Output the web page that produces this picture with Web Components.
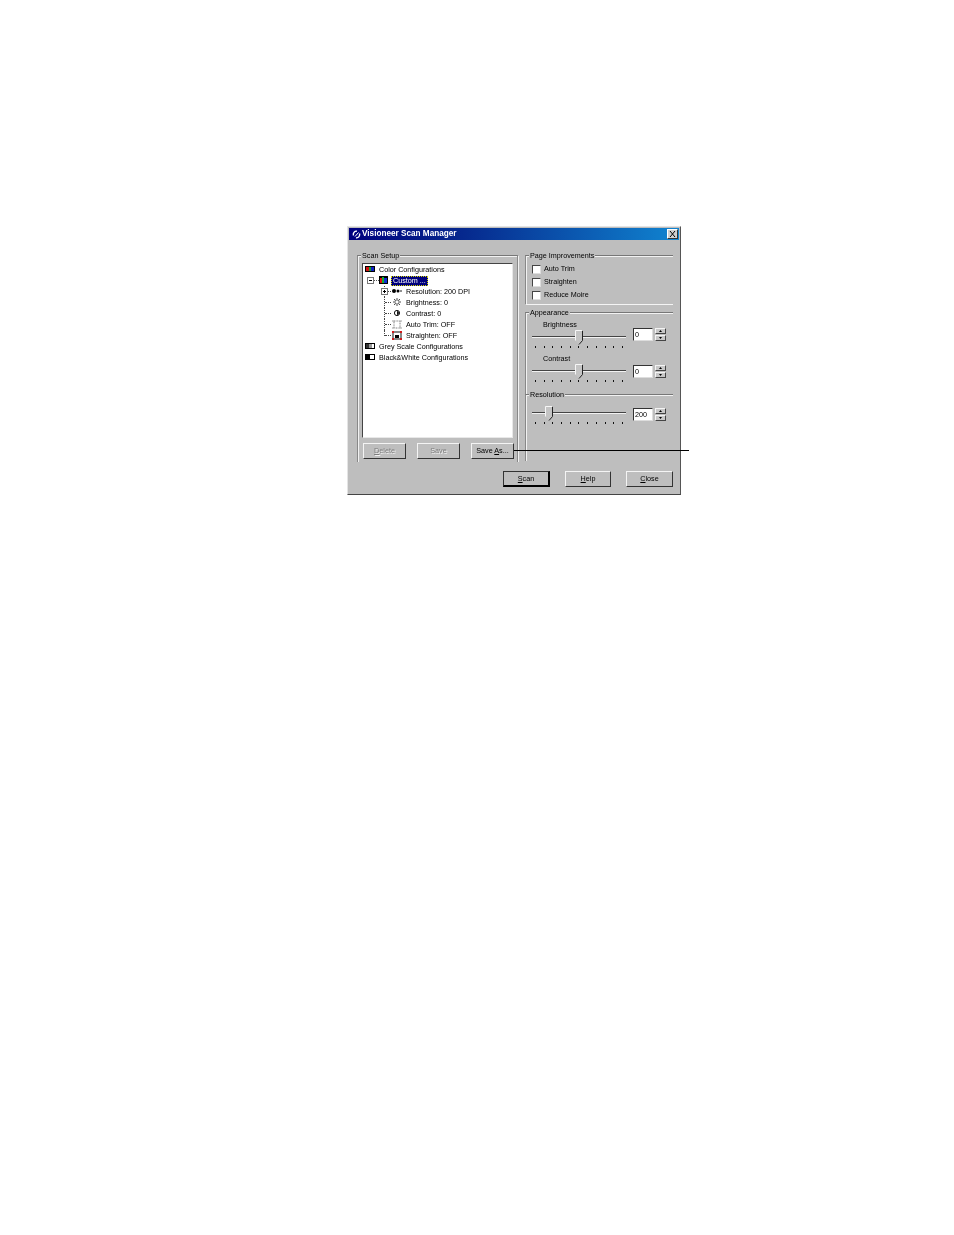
<!DOCTYPE html>
<html lang="en">
<head>
<meta charset="UTF-8">
<title>Visioneer Scan Manager</title>
<style>
    html, body { margin: 0; background: #fff; }
    body {
        height: 1235px;
        box-sizing: border-box;
        padding: 226px 0 0 347px;
        font: 7.2px/10px "Liberation Sans", Arial, sans-serif;
        color: #000;
    }
    .main { display: flex; margin: 15px 0 0 8px; }
    .right { display: flex; flex-direction: column; margin-left: 7px; width: 148px; }
    .footer { display: flex; justify-content: flex-end; gap: 15px; padding: 9px 6px 0 0; }
    .checks { display: flex; flex-direction: column; gap: 3.2px; padding: 8px 0 0 6px; }
    .tree-buttons { display: flex; gap: 11px; padding: 5px 0 0 1px; }
</style>
</head>
<body>
<scan-dialog>
    <title-bar>Visioneer Scan Manager</title-bar>
    <div class="main">
        <group-box label="Scan Setup" w="161" h="207" pad="7px 0 0 4px">
            <tree-view>
                <tree-row icon="color">Color Configurations</tree-row>
                <tree-row icon="custom" kind="open" selected>Custom ...</tree-row>
                <tree-row icon="res" kind="child-plus">Resolution: 200 DPI</tree-row>
                <tree-row icon="sun" kind="child">Brightness: 0</tree-row>
                <tree-row icon="contrast" kind="child">Contrast: 0</tree-row>
                <tree-row icon="trim" kind="child">Auto Trim: OFF</tree-row>
                <tree-row icon="straight" kind="last">Straighten: OFF</tree-row>
                <tree-row icon="grey">Grey Scale Configurations</tree-row>
                <tree-row icon="bw">Black&amp;White Configurations</tree-row>
            </tree-view>
            <div class="tree-buttons">
                <win-button w="43" disabled><u>D</u>elete</win-button>
                <win-button w="43" disabled>Save</win-button>
                <win-button w="43">Save <u>A</u>s...</win-button>
            </div>
        </group-box>
        <div class="right">
            <group-box label="Page Improvements" h="50" bottom pad="0">
                <div class="checks">
                    <check-row>Auto Trim</check-row>
                    <check-row>Straighten</check-row>
                    <check-row>Reduce Moire</check-row>
                </div>
            </group-box>
            <group-box label="Appearance" h="82" top="7" pad="7px 0 0 6px">
                <slider-row label="Brightness" value="0" thumb="43" spin="-2"></slider-row>
                <slider-row label="Contrast" value="0" thumb="43" spin="1"></slider-row>
            </group-box>
            <group-box label="Resolution" h="67" pad="11px 0 0 6px">
                <slider-row value="200" thumb="13" spin="2"></slider-row>
            </group-box>
        </div>
    </div>
    <div class="footer">
        <win-button w="47" isdefault><u>S</u>can</win-button>
        <win-button w="46"><u>H</u>elp</win-button>
        <win-button w="47"><u>C</u>lose</win-button>
    </div>
</scan-dialog>
<call-out></call-out>

<script>
    class ScanDialog extends HTMLElement {
        constructor() {
            super();
            this.attachShadow({ mode: 'open' });
            this.shadowRoot.innerHTML = `
                <style>
                    :host {
                        display: block;
                        box-sizing: border-box;
                        width: 334px;
                        height: 269px;
                        background: #bebebe;
                        border: 1px solid;
                        border-color: #e4e4e4 #555 #444 #e4e4e4;
                        padding: 1px;
                        filter: blur(0.3px);
                    }
                </style>
                <slot></slot>`;
        }
    }

    class TitleBar extends HTMLElement {
        constructor() {
            super();
            this.attachShadow({ mode: 'open' });
            this.shadowRoot.innerHTML = `
                <style>
                    :host {
                        display: flex;
                        align-items: center;
                        height: 12px;
                        padding: 0 1px 0 3px;
                        background: linear-gradient(90deg, #00007f 0%, #06298e 35%, #1084d0 100%);
                        color: #fff;
                        font-weight: bold;
                        font-size: 8.2px;
                    }
                    svg { flex: none; margin-right: 1px; }
                    .text { flex: 1; white-space: nowrap; }
                    .close {
                        box-sizing: border-box;
                        width: 11px;
                        height: 10px;
                        background: #d0d0d0;
                        border: 1px solid;
                        border-color: #fff #333 #333 #fff;
                        display: flex;
                    }
                </style>
                <svg width="9" height="9" viewBox="0 0 9 9" fill="none" stroke="#fff" stroke-width="1.4">
                    <path d="M1.5 5.5A3.2 3.2 0 0 1 5 1.2"/>
                    <path d="M7.5 3.5A3.2 3.2 0 0 1 4 7.8"/>
                    <path d="M3 6.5L6.5 2.5" stroke-width="1"/>
                </svg>
                <span class="text"><slot></slot></span>
                <span class="close">
                    <svg width="9" height="8" viewBox="0 0 9 8" stroke="#000" stroke-width="1" style="margin:0">
                        <path d="M2 1L7 7M7 1L2 7"/>
                    </svg>
                </span>`;
        }
    }

    class GroupBox extends HTMLElement {
        constructor() {
            super();
            this.attachShadow({ mode: 'open' });
            const w = this.getAttribute('w');
            const h = this.getAttribute('h');
            const top = this.getAttribute('top') || 0;
            const pad = this.getAttribute('pad') || '0';
            const isLeft = w !== null;
            this.shadowRoot.innerHTML = `
                <style>
                    :host {
                        display: block;
                        position: relative;
                        box-sizing: border-box;
                        ${w ? `width: ${w}px;` : ''}
                        height: ${h}px;
                        margin-top: ${top}px;
                        padding: ${pad};
                        border-top: 1px solid #777;
                        box-shadow: inset 0 1px 0 #f2f2f2;
                        border-left: 1px solid #888;
                        ${isLeft ? 'border-right: 1px solid #888;' : ''}
                    }
                    :host([bottom]) { border-bottom: 1px solid #f4f4f4; }
                    .legend {
                        position: absolute;
                        top: -5px;
                        left: 3px;
                        padding: 0 1px;
                        background: #bebebe;
                        white-space: nowrap;
                    }
                    .edge {
                        position: absolute;
                        top: 0;
                        bottom: 0;
                        left: 0;
                        width: 1px;
                        background: #f2f2f2;
                    }
                    .edge.r { left: auto; right: -2px; display: ${isLeft ? 'block' : 'none'}; }
                </style>
                <span class="edge"></span>
                <span class="edge r"></span>
                <span class="legend">${this.getAttribute('label')}</span>
                <slot></slot>`;
        }
    }

    class TreeView extends HTMLElement {
        constructor() {
            super();
            this.attachShadow({ mode: 'open' });
            this.shadowRoot.innerHTML = `
                <style>
                    :host {
                        display: block;
                        box-sizing: border-box;
                        width: 151px;
                        height: 175px;
                        background: #fff;
                        border: 1px solid;
                        border-color: #444 #e8e8e8 #e8e8e8 #444;
                    }
                </style>
                <slot></slot>`;
        }
    }

    const TREE_ICONS = {
        color: `<rect x="0" y="1" width="10" height="6" fill="#000"/><rect x="1" y="2" width="3" height="4" fill="#d01010"/><rect x="4" y="2" width="2" height="4" fill="#10a030"/><rect x="6" y="2" width="3" height="4" fill="#1020c0"/>`,
        custom: `<rect x="0" y="0" width="9" height="8" fill="#000"/><rect x="1" y="2" width="2" height="5" fill="#e01010"/><rect x="3" y="1" width="2" height="6" fill="#10b030"/><rect x="5" y="2" width="3" height="5" fill="#1030d0"/>`,
        res: `<circle cx="3" cy="4" r="2" fill="#000"/><circle cx="7" cy="4" r="1.5" fill="#000"/><circle cx="10" cy="4" r=".8" fill="#000"/>`,
        sun: `<circle cx="6" cy="4" r="2.2" fill="#fff" stroke="#222" stroke-width=".8"/><path d="M6 0V1M6 7V8M2 4H3M9 4H10M3 1L4 2M9 1L8 2M3 7L4 6M9 7L8 6" stroke="#222" stroke-width=".8"/>`,
        contrast: `<circle cx="6" cy="4" r="2.6" fill="#fff" stroke="#111"/><path d="M6 2a2 2 0 0 1 0 4z" fill="#111"/>`,
        trim: `<rect x="3" y="1" width="6" height="7" fill="#fff" stroke="#666" stroke-width=".8" stroke-dasharray="1 .6"/><path d="M1 1H3M9 1H11M1 8H3M9 8H11" stroke="#777" stroke-width=".7"/>`,
        straight: `<rect x="2" y="1" width="8" height="7" fill="#fff" stroke="#111"/><rect x="4" y="4" width="4" height="3" fill="#000"/><path d="M1 0H3V2H1ZM9 0H11V2H9ZM1 7H3V9H1ZM9 7H11V9H9Z" fill="#d01818"/>`,
        grey: `<rect x="0" y="1" width="10" height="6" fill="#000"/><rect x="1" y="2" width="8" height="4" fill="#fff"/><rect x="1" y="2" width="3" height="4" fill="#333"/><rect x="4" y="2" width="3" height="4" fill="#999"/>`,
        bw: `<rect x="0" y="1" width="10" height="6" fill="#000"/><rect x="5" y="2" width="4" height="4" fill="#fff"/>`
    };

    class TreeRow extends HTMLElement {
        constructor() {
            super();
            this.attachShadow({ mode: 'open' });
            const kind = this.getAttribute('kind') || 'root';
            const isChild = kind === 'child' || kind === 'child-plus' || kind === 'last';
            const box = (sign) => `<span class="box">${sign}</span>`;
            let lead = '';
            if (kind === 'open') {
                lead = `<span class="gut open">${box('<i class="h"></i>')}<span class="dash"></span></span>`;
            } else if (isChild) {
                lead = `<span class="gut kid ${kind}"><span class="v"></span><span class="hl"></span>
                    ${kind === 'child-plus' ? box('<i class="h"></i><i class="p"></i>') : ''}</span>`;
            }
            this.shadowRoot.innerHTML = `
                <style>
                    :host {
                        display: flex;
                        align-items: center;
                        height: 11px;
                        padding-left: 1px;
                        white-space: nowrap;
                    }
                    svg { flex: none; display: block; }
                    .gut { position: relative; flex: none; height: 11px; }
                    .gut.open { width: 12px; margin-left: 3px; }
                    .gut.kid { width: 27px; }
                    .box {
                        position: absolute;
                        box-sizing: border-box;
                        width: 7px;
                        height: 7px;
                        background: #fff;
                        border: 1px solid #777;
                    }
                    .open .box { left: 0; top: 2px; }
                    .kid .box { left: 17px; top: 2px; z-index: 1; }
                    .h { position: absolute; left: 1px; top: 2px; width: 3px; height: 1px; background: #000; }
                    .p { position: absolute; left: 2px; top: 1px; width: 1px; height: 3px; background: #000; }
                    .dash { position: absolute; left: 7px; top: 5px; width: 5px; border-top: 1px dotted #555; }
                    .v { position: absolute; left: 20px; top: 0; bottom: 0; border-left: 1px dotted #444; }
                    .last .v { bottom: 5px; }
                    .hl { position: absolute; left: 21px; top: 5px; width: 6px; border-top: 1px dotted #444; }
                    .icon-root { margin-right: 4px; }
                    .icon-open { margin-right: 0; }
                    .icon-kid { margin-right: 3px; }
                    :host([selected]) .label {
                        background: #00007b;
                        color: #fff;
                        outline: 1px dotted #d8d800;
                        outline-offset: -1px;
                        margin-left: 2px;
                        padding: 0 2px;
                    }
                </style>
                ${lead}
                <svg class="${isChild ? 'icon-kid' : (kind === 'open' ? 'icon-open' : 'icon-root')}" width="${isChild ? 12 : 10}" height="9"
                     viewBox="0 0 ${isChild ? 12 : 10} 9" style="margin-left:${kind === 'root' ? 1 : 0}px">
                    ${TREE_ICONS[this.getAttribute('icon')]}
                </svg>
                <span class="label"><slot></slot></span>`;
        }
    }

    class WinButton extends HTMLElement {
        constructor() {
            super();
            this.attachShadow({ mode: 'open' });
            this.shadowRoot.innerHTML = `
                <style>
                    :host {
                        display: flex;
                        align-items: center;
                        justify-content: center;
                        box-sizing: border-box;
                        flex: none;
                        width: ${this.getAttribute('w')}px;
                        height: 16px;
                        background: #bebebe;
                        border: 1px solid;
                        border-color: #f4f4f4 #333 #333 #f4f4f4;
                        white-space: nowrap;
                    }
                    :host([isdefault]) { border-width: 1px 2px 2px 1px; border-color: #333 #000 #000 #333; }
                    :host([disabled]) { color: #7d7d7d; text-shadow: 1px 1px 0 #f2f2f2; }
                </style>
                <span><slot></slot></span>`;
        }
    }

    class CheckRow extends HTMLElement {
        constructor() {
            super();
            this.attachShadow({ mode: 'open' });
            this.shadowRoot.innerHTML = `
                <style>
                    :host { display: flex; align-items: center; gap: 3px; height: 10px; white-space: nowrap; }
                    .box {
                        box-sizing: border-box;
                        width: 9px;
                        height: 9px;
                        background: #fff;
                        border: 1px solid;
                        border-color: #444 #ddd #ddd #444;
                    }
                </style>
                <span class="box"></span><span><slot></slot></span>`;
        }
    }

    class SliderRow extends HTMLElement {
        constructor() {
            super();
            this.attachShadow({ mode: 'open' });
            const label = this.getAttribute('label');
            const ticks = '<i></i>'.repeat(11);
            this.shadowRoot.innerHTML = `
                <style>
                    :host { display: block; }
                    .label { height: 10px; padding-left: 11px; white-space: nowrap; }
                    .row { display: flex; height: 24px; align-items: flex-start; }
                    .slider { position: relative; flex: none; width: 94px; height: 24px; margin-right: 7px; }
                    .track {
                        position: absolute;
                        left: 0; right: 0; top: 6px;
                        height: 1px;
                        background: #444;
                        box-shadow: 0 1px 0 #f2f2f2;
                    }
                    .thumb { position: absolute; top: 0; left: ${this.getAttribute('thumb')}px; display: block; }
                    .ticks {
                        position: absolute;
                        left: 3px; right: 3px; top: 16px;
                        display: flex;
                        justify-content: space-between;
                    }
                    .ticks i { width: 1px; height: 2px; background: #111; }
                    .spin {
                        box-sizing: border-box;
                        flex: none;
                        width: 20px;
                        height: 13px;
                        margin: ${this.getAttribute('spin')}px 2px 0 0;
                        padding-left: 1px;
                        background: #fff;
                        border: 1px solid;
                        border-color: #333 #ddd #ddd #333;
                        line-height: 11px;
                    }
                    .arrows {
                        flex: none;
                        width: 11px;
                        margin-top: ${this.getAttribute('spin')}px;
                        display: flex;
                        flex-direction: column;
                        gap: 1px;
                    }
                    .arrows span {
                        box-sizing: border-box;
                        height: 6px;
                        background: #c8c8c8;
                        border: 1px solid;
                        border-color: #f4f4f4 #444 #444 #f4f4f4;
                        display: flex;
                        align-items: center;
                        justify-content: center;
                    }
                    .arrows svg { display: block; }
                </style>
                ${label ? `<div class="label">${label}</div>` : ''}
                <div class="row">
                    <div class="slider">
                        <div class="track"></div>
                        <svg class="thumb" width="8" height="15" viewBox="0 0 8 15">
                            <path d="M.5 .5H7.5V10.5L4 14.5L.5 10.5Z" fill="#c4c4c4"/>
                            <path d="M7.5 .5V10.5L4 14.5" fill="none" stroke="#222"/>
                            <path d="M.5 10.5V.5H7.5" fill="none" stroke="#f6f6f6"/>
                        </svg>
                        <div class="ticks">${ticks}</div>
                    </div>
                    <div class="spin">${this.getAttribute('value')}</div>
                    <div class="arrows">
                        <span><svg width="3" height="2"><path d="M1.5 0L3 2H0Z" fill="#000"/></svg></span>
                        <span><svg width="3" height="2"><path d="M0 0H3L1.5 2Z" fill="#000"/></svg></span>
                    </div>
                </div>`;
        }
    }

    // leader line from the Save As button out past the dialog edge
    class CallOut extends HTMLElement {
        constructor() {
            super();
            this.attachShadow({ mode: 'open' });
            this.shadowRoot.innerHTML = `
                <style>
                    :host {
                        position: absolute;
                        left: 514px;
                        top: 450px;
                        width: 175px;
                        height: 1px;
                        background: #000;
                    }
                </style>`;
        }
    }

    customElements.define('scan-dialog', ScanDialog);
    customElements.define('title-bar', TitleBar);
    customElements.define('group-box', GroupBox);
    customElements.define('tree-view', TreeView);
    customElements.define('tree-row', TreeRow);
    customElements.define('win-button', WinButton);
    customElements.define('check-row', CheckRow);
    customElements.define('slider-row', SliderRow);
    customElements.define('call-out', CallOut);
</script>
</body>
</html>
